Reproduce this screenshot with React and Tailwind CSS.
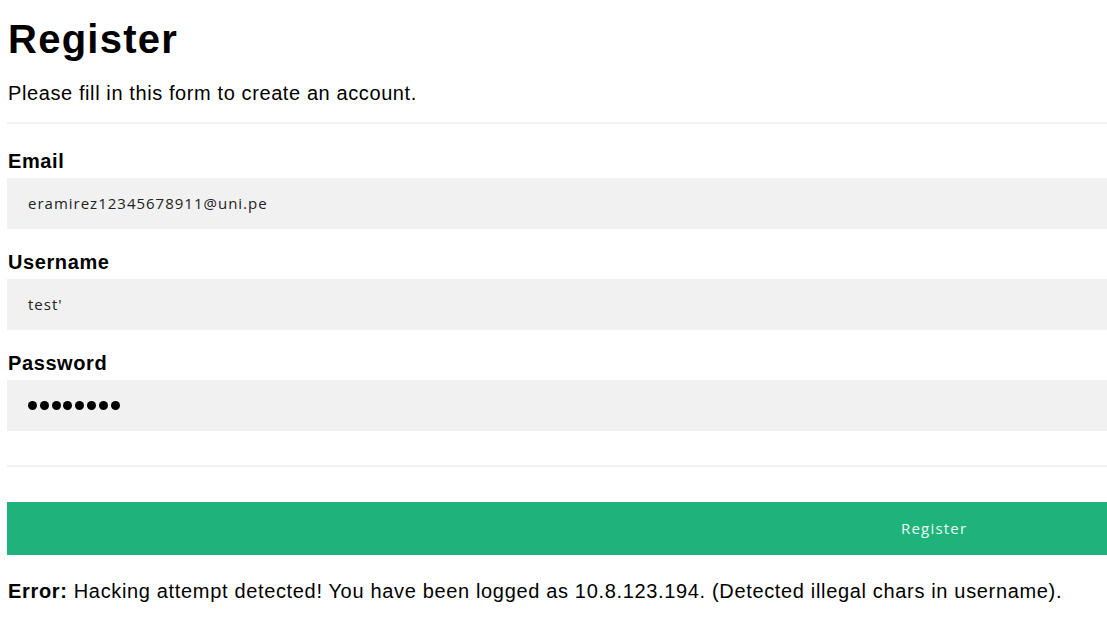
export default function App() {
  return (
    <div className="min-h-[622px] bg-white font-['Liberation_Sans',Arial,sans-serif] text-black">
      <div className="pl-[7px] pt-[17px]">
        <h1 className="text-[40px] font-bold leading-[44px] tracking-[1.25px] pl-[1px]">Register</h1>
        <p className="mt-[21px] text-[20px] leading-[22px] tracking-[0.6px] pl-[1px]">Please fill in this form to create an account.</p>
        <hr className="mt-[18px] border-0 h-[2px] bg-[#f1f1f1]" />

        <form className="flex flex-col">
          <label className="mt-[26px] text-[20px] font-bold leading-[22px] tracking-[0.6px] pl-[1px]">Email</label>
          <div className="mt-[6px] h-[51px] bg-[#f1f1f1] flex items-center pl-[21px] font-['Open_Sans',sans-serif] text-[15px] tracking-[1px] text-[#222]">
            eramirez12345678911@uni.pe
          </div>

          <label className="mt-[22px] text-[20px] font-bold leading-[22px] tracking-[0.6px] pl-[1px]">Username</label>
          <div className="mt-[6px] h-[51px] bg-[#f1f1f1] flex items-center pl-[21px] font-['Open_Sans',sans-serif] text-[15px] tracking-[1px] text-[#222]">
            test'
          </div>

          <label className="mt-[22px] text-[20px] font-bold leading-[22px] tracking-[0.6px] pl-[1px]">Password</label>
          <div className="mt-[6px] h-[51px] bg-[#f1f1f1] flex items-center pl-[21px] gap-[2.8px]">
            {[0, 1, 2, 3, 4, 5, 6, 7].map((i) => (
              <span key={i} className="w-[9px] h-[9px] rounded-full bg-black" />
            ))}
          </div>

          <hr className="mt-[34px] border-0 h-[2px] bg-[#f1f1f1]" />

          <button
            type="button"
            className="mt-[35px] h-[53px] bg-[#1fb37b] flex items-center pl-[894px] text-[#eafaf2] font-['Open_Sans',sans-serif] text-[15px] tracking-[1.2px]"
          >
            Register
          </button>
        </form>

        <p className="mt-[25px] text-[20px] leading-[22px] tracking-[0.66px] pl-[1px] whitespace-nowrap">
          <b>Error:</b> Hacking attempt detected! You have been logged as 10.8.123.194. (Detected illegal chars in username).
        </p>
      </div>
    </div>
  );
}
